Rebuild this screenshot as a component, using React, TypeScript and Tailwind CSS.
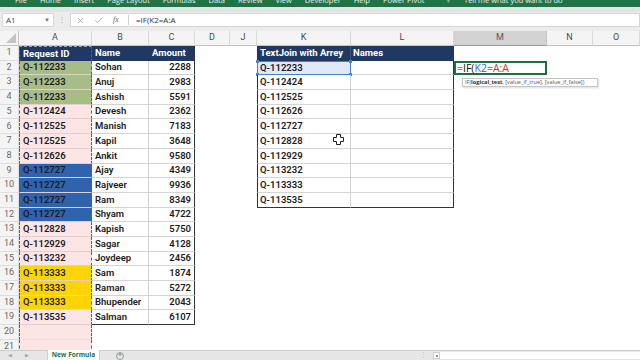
import React from 'react';
import { X, Check } from 'lucide-react';

const aIds = ['Q-112233','Q-112233','Q-112233','Q-112424','Q-112525','Q-112525','Q-112626','Q-112727','Q-112727','Q-112727','Q-112727','Q-112828','Q-112929','Q-113232','Q-113333','Q-113333','Q-113333','Q-113535'];
const names = ['Sohan','Anuj','Ashish','Devesh','Manish','Kapil','Ankit','Ajay','Rajveer','Ram','Shyam','Kapish','Sagar','Joydeep','Sam','Raman','Bhupender','Salman'];
const amounts = ['2288','2983','5591','2362','7183','3648','9580','4349','9936','8349','4722','5750','4128','2456','1874','5272','2043','6107'];
const kIds = ['Q-112233','Q-112424','Q-112525','Q-112626','Q-112727','Q-112828','Q-112929','Q-113232','Q-113333','Q-113535'];

function aFill(i: number) {
  if (i < 3) return 'bg-[#a7bd87]';
  if (i >= 7 && i <= 10) return 'bg-[#3063ad]';
  if (i >= 14 && i <= 16) return 'bg-[#ffd400]';
  return 'bg-[#fde5e5]';
}

function Row({ r }: { r: number }) {
  const i = r - 2;
  const isData = r >= 2 && r <= 19;
  const isHead = r === 1;
  const kData = r >= 2 && r <= 11;
  return (
    <div className="flex h-[14.7px] shrink-0 text-[9.5px] text-[#1c1c1c] font-semibold">
      <div className="w-[19px] shrink-0 bg-[#f4f4f4] border-r border-b border-[#dedede] text-[9px] font-normal text-[#6a6a6a] flex items-center justify-center">
        {r}
      </div>
      {/* A */}
      <div
        className={`w-[73px] shrink-0 border-x border-dashed border-x-[#5e5e5e] flex items-center pl-[3px] ${
          isHead
            ? 'bg-[#203864] text-white font-bold border-t [border-top-style:dashed] border-t-[#9aa3b8]'
            : isData
            ? `${aFill(i)} border-b [border-bottom-style:solid] border-b-[#e3cfcf]`
            : 'bg-[#fde5e5] border-b [border-bottom-style:solid] border-b-[#efdcdc]'
        }`}
      >
        {isHead ? 'Request ID' : isData ? aIds[i] : ''}
      </div>
      {/* B */}
      <div
        className={`w-[57px] shrink-0 flex items-center pl-[3px] ${
          isHead
            ? 'bg-[#203864] text-white font-bold'
            : isData
            ? `bg-white border-r border-r-[#d4d4d4] border-b ${r === 19 ? 'border-b-[#333333]' : 'border-b-[#d4d4d4]'}`
            : ''
        }`}
      >
        {isHead ? 'Name' : isData ? names[i] : ''}
      </div>
      {/* C */}
      <div
        className={`w-[46px] shrink-0 flex items-center ${
          isHead
            ? 'bg-[#203864] text-white font-bold pl-[3px] border-r border-r-[#333333]'
            : isData
            ? `bg-white justify-end pr-[3px] border-r border-r-[#333333] border-b ${r === 19 ? 'border-b-[#333333]' : 'border-b-[#d4d4d4]'}`
            : ''
        }`}
      >
        {isHead ? 'Amount' : isData ? amounts[i] : ''}
      </div>
      {/* D */}
      <div className="w-[35px] shrink-0" />
      {/* J */}
      <div className="w-[27px] shrink-0" />
      {/* K */}
      <div
        className={`w-[94px] shrink-0 flex items-center pl-[2px] relative ${
          r === 1
            ? 'bg-[#203864] text-white font-bold border-l border-l-[#333333] border-r border-r-[#3b4f78]'
            : r === 2
            ? 'bg-[#dfe8f5] border border-[#4a7fd0]'
            : kData
            ? `bg-white border-l border-l-[#333333] border-r border-r-[#d4d4d4] border-b ${r === 11 ? 'border-b-[#333333]' : 'border-b-[#d4d4d4]'}`
            : ''
        }`}
      >
        {r === 1 ? 'TextJoin with Arrey' : kData ? kIds[r - 2] : ''}
        {r === 2 && (
          <>
            <div className="absolute -left-[2px] -top-[2px] w-[3px] h-[3px] bg-[#4a7fd0]" />
            <div className="absolute -right-[2px] -top-[2px] w-[3px] h-[3px] bg-[#4a7fd0]" />
            <div className="absolute -left-[2px] -bottom-[2px] w-[3px] h-[3px] bg-[#4a7fd0]" />
            <div className="absolute -right-[2px] -bottom-[2px] w-[3px] h-[3px] bg-[#4a7fd0]" />
          </>
        )}
      </div>
      {/* L */}
      <div
        className={`w-[103px] shrink-0 flex items-center pl-[2px] ${
          r === 1
            ? 'bg-[#203864] text-white font-bold border-r border-r-[#333333]'
            : kData
            ? `bg-white border-r border-r-[#333333] border-b ${r === 11 ? 'border-b-[#333333]' : 'border-b-[#d4d4d4]'}`
            : ''
        }`}
      >
        {r === 1 ? 'Names' : ''}
      </div>
      {/* M */}
      <div
        className={`w-[93px] shrink-0 relative ${
          r === 2 ? 'border-2 border-[#1f6e43] bg-white flex items-center pl-[1px]' : ''
        }`}
      >
        {r === 2 && (
          <>
            <span className="text-[10.5px] font-normal text-[#111] font-['Open_Sans',sans-serif] leading-none whitespace-nowrap">
              =IF(<span className="text-[#3b62c4]">K2</span>=<span className="text-[#c0392b]">A:A</span>
            </span>
            <div className="absolute left-[6px] top-[15px] w-[136px] h-[9px] bg-white border border-[#c6c6c6] shadow-[1px_1px_2px_rgba(0,0,0,0.15)] flex items-center pl-[2px] text-[5.6px] font-normal text-[#555] whitespace-nowrap font-['Open_Sans',sans-serif] z-10">
              IF(<span className="font-bold text-[#333]">logical_test</span>, [value_if_true], [value_if_false])
            </div>
          </>
        )}
      </div>
      {/* N */}
      <div className="w-[46px] shrink-0" />
      {/* O */}
      <div className="w-[47px] shrink-0" />
    </div>
  );
}

function ColHead({ w, label, active }: { w: string; label: string; active?: boolean }) {
  return (
    <div
      className={`${w} shrink-0 flex items-center justify-center border-r border-b text-[9px] ${
        active ? 'bg-[#d3d3d3] border-r-[#c4c4c4] border-b-[#9a9a9a] text-[#555]' : 'bg-[#f4f4f4] border-r-[#d8d8d8] border-b-[#c4c4c4] text-[#4a4a4a]'
      }`}
    >
      {label}
    </div>
  );
}

export default function App() {
  const rows = Array.from({ length: 21 }, (_, k) => k + 1);
  return (
    <div className="w-[640px] h-[360px] overflow-hidden flex flex-col bg-white font-['Roboto',sans-serif]">
      {/* ribbon (top cut off) */}
      <div className="h-[7px] bg-[#217346] overflow-hidden shrink-0">
        <div className="flex items-center h-[12px] -mt-[5.5px] pl-[15px] gap-[13px] text-[7.5px] text-white/90 font-['Open_Sans',sans-serif] whitespace-nowrap">
          <span>File</span>
          <span>Home</span>
          <span>Insert</span>
          <span>Page Layout</span>
          <span>Formulas</span>
          <span>Data</span>
          <span>Review</span>
          <span>View</span>
          <span>Developer</span>
          <span>Help</span>
          <span>Power Pivot</span>
          <span className="ml-[8px]">♀</span>
          <span>Tell me what you want to do</span>
        </div>
      </div>
      <div className="h-[5px] bg-[#e3e3e3] shrink-0" />
      {/* formula bar */}
      <div className="h-[19px] bg-[#ececec] shrink-0 flex items-start pt-[1px] text-[#444]">
        <div className="ml-[2px] w-[52px] h-[14px] bg-white border border-[#d6d6d6] flex items-center justify-between px-[3px] text-[8px] font-['Open_Sans',sans-serif]">
          <span>A1</span>
          <span className="text-[6px] text-[#777]">▼</span>
        </div>
        <div className="w-[16px] h-[14px] flex items-center justify-center text-[8px] text-[#b0b0b0]">⋮</div>
        <div className="flex-1 h-[14px] bg-white border border-[#d6d6d6] flex items-center">
          <div className="w-[18px] flex justify-center text-[#7c7c7c]"><X size={9} strokeWidth={1.5} /></div>
          <div className="w-[18px] flex justify-center text-[#7c7c7c]"><Check size={9} strokeWidth={1.5} /></div>
          <div className="w-[18px] flex justify-center text-[8px] italic text-[#666] font-['Liberation_Serif',serif]">fx</div>
          <div className="ml-[3px] w-px h-[10px] bg-[#d0d0d0]" />
          <div className="pl-[7px] text-[8px] text-[#333] font-['Open_Sans',sans-serif]">=IF(K2=A:A</div>
        </div>
      </div>
      {/* column headers */}
      <div className="h-[15px] flex shrink-0">
        <div className="w-[19px] shrink-0 bg-[#f4f4f4] border-r border-b border-[#c4c4c4] relative">
          <div className="absolute right-[2px] bottom-[2px] w-0 h-0 border-l-[10px] border-l-transparent border-b-[10px] border-b-[#c4c4c4]" />
        </div>
        <ColHead w="w-[73px]" label="A" />
        <ColHead w="w-[57px]" label="B" />
        <ColHead w="w-[46px]" label="C" />
        <ColHead w="w-[35px]" label="D" />
        <ColHead w="w-[27px]" label="J" />
        <ColHead w="w-[94px]" label="K" />
        <ColHead w="w-[103px]" label="L" />
        <ColHead w="w-[93px]" label="M" active />
        <ColHead w="w-[46px]" label="N" />
        <ColHead w="w-[47px]" label="O" />
      </div>
      {/* grid */}
      <div className="flex-1 overflow-hidden relative flex flex-col">
        {rows.map((r) => (
          <Row key={r} r={r} />
        ))}
        {/* mouse cursor */}
        <svg className="absolute left-[333px] top-[88px]" width="11" height="11" viewBox="0 0 11 11">
          <path d="M3.5 0.5h4v3h3v4h-3v3h-4v-3h-3v-4h3z" fill="#fff" stroke="#222" strokeWidth="1" />
        </svg>
      </div>
      {/* sheet tabs */}
      <div className="h-[10px] shrink-0 bg-[#e6e6e6] border-t border-[#cdcdcd] flex items-center text-[#a8a8a8] relative">
        <span className="ml-[8px] text-[5px]">◀</span>
        <span className="ml-[13px] text-[5px]">▶</span>
        <div className="ml-[18px] w-[53px] h-[10px] -mt-[1px] bg-white flex items-center justify-center text-[6.5px] font-bold text-[#217346] font-['Open_Sans',sans-serif] border-x border-[#d0d0d0] whitespace-nowrap">
          New Formula
        </div>
        <div className="ml-[16px] w-[8px] h-[8px] rounded-full border border-[#9a9a9a] flex items-center justify-center text-[7px] leading-none text-[#777]">+</div>
        <div className="ml-[296px] text-[7px] text-[#bbb]">⋮</div>
        <div className="ml-[6px] w-[7px] h-[7px] bg-white border border-[#cfcfcf] flex items-center justify-center">
          <div className="w-[2px] h-[2px] bg-[#666] rounded-full" />
        </div>
        <div className="flex-1 h-[7px] bg-white" />
      </div>
    </div>
  );
}
